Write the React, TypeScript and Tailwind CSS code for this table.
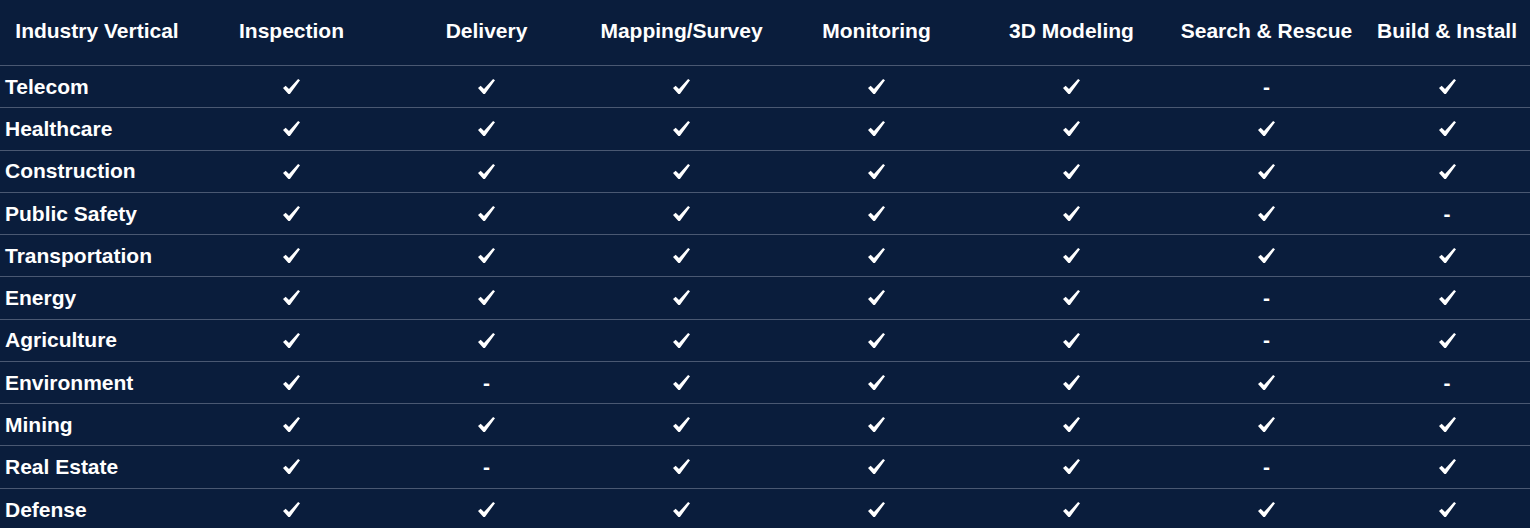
import React from "react";

const cols = [
  "Inspection",
  "Delivery",
  "Mapping/Survey",
  "Monitoring",
  "3D Modeling",
  "Search & Rescue",
  "Build & Install",
];

const rows: [string, string][] = [
  ["Telecom", "11111-1"],
  ["Healthcare", "1111111"],
  ["Construction", "1111111"],
  ["Public Safety", "111111-"],
  ["Transportation", "1111111"],
  ["Energy", "11111-1"],
  ["Agriculture", "11111-1"],
  ["Environment", "1-1111-"],
  ["Mining", "1111111"],
  ["Real Estate", "1-111-1"],
  ["Defense", "1111111"],
];

const widths = ["w-[195px]", "w-[195px]", "w-[195px]", "w-[195px]", "w-[195px]", "w-[195px]", "flex-1"];

function Check() {
  return (
    <svg width="17" height="15" viewBox="0 0 17 15" className="inline-block align-middle">
      <path
        d="M0 8.9 L2.7 6.7 L6 10.1 L15.1 0.1 L17 1.2 L6.9 14.9 L5.4 14.9 Z"
        fill="#ffffff"
      />
    </svg>
  );
}

export default function App() {
  return (
    <div
      className="w-[1530px] h-[528px] overflow-hidden bg-[#0a1d3c] text-white font-bold text-[21px]"
      style={{ fontFamily: '"Liberation Sans", Arial, sans-serif' }}
    >
      <div className="flex h-[66px] items-center pb-[3px] border-b border-[#4a5872]">
        <div className="w-[194px] shrink-0 text-center">Industry Vertical</div>
        {cols.map((c, i) => (
          <div key={c} className={`${widths[i]} shrink-0 text-center`}>
            {c}
          </div>
        ))}
      </div>
      {rows.map(([name, vals], r) => (
        <div
          key={name}
          className={`flex h-[42.25px] items-center ${r < rows.length - 1 ? "border-b border-[#4a5872]" : ""}`}
        >
          <div className="w-[194px] shrink-0 pl-[5px]">{name}</div>
          {vals.split("").map((v, i) => (
            <div key={i} className={`${widths[i]} shrink-0 flex items-center justify-center`}>
              {v === "1" ? <Check /> : <span>-</span>}
            </div>
          ))}
        </div>
      ))}
    </div>
  );
}
